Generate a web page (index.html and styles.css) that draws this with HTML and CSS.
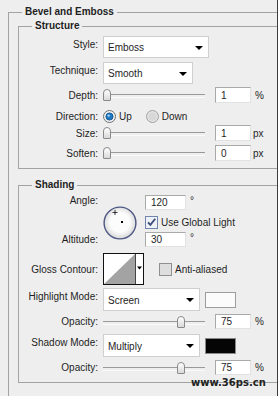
FILE: index.html
```html
<!DOCTYPE html>
<html>
  <head>
    <title>Bevel and Emboss</title>
    <link rel="stylesheet" href="styles.css">
  </head>
  <body>
    <fieldset class="group outer">
      <legend>Bevel and Emboss</legend>

      <fieldset class="group section">
        <legend>Structure</legend>

        <div class="row row-select">
          <span class="lbl">Style:</span>
          <div class="select select-style"><span>Emboss</span><i class="caret"></i></div>
        </div>

        <div class="row row-select row-technique">
          <span class="lbl">Technique:</span>
          <div class="select select-technique"><span>Smooth</span><i class="caret"></i></div>
        </div>

        <div class="row row-slider row-depth">
          <span class="lbl">Depth:</span>
          <div class="slider"><div class="thumb"></div></div>
          <div class="num">1</div>
          <span class="unit">%</span>
        </div>

        <div class="row row-direction">
          <span class="lbl">Direction:</span>
          <span class="opt">
            <svg class="radio" width="13" height="13" viewBox="0 0 13 13">
              <circle cx="6.5" cy="6.5" r="6" fill="#f3f3f3" stroke="#6f6f6f"/>
              <circle cx="6.5" cy="6.5" r="3.6" fill="#1f78c1" stroke="#0d4c86" stroke-width="0.8"/>
              <circle cx="5.6" cy="5.6" r="1.2" fill="#a8d6f8"/>
            </svg>
            Up
          </span>
          <span class="opt">
            <svg class="radio" width="13" height="13" viewBox="0 0 13 13">
              <circle cx="6.5" cy="6.5" r="6" fill="#e4e4e4" stroke="#a0a0a0"/>
              <circle cx="6.5" cy="6.5" r="4.3" fill="#d8d8d8"/>
            </svg>
            Down
          </span>
        </div>

        <div class="row row-slider row-size">
          <span class="lbl">Size:</span>
          <div class="slider"><div class="thumb"></div></div>
          <div class="num">1</div>
          <span class="unit unit-px">px</span>
        </div>

        <div class="row row-slider row-soften">
          <span class="lbl">Soften:</span>
          <div class="slider"><div class="thumb"></div></div>
          <div class="num">0</div>
          <span class="unit unit-px">px</span>
        </div>
      </fieldset>

      <fieldset class="group section shading">
        <legend>Shading</legend>

        <div class="angle">
          <div class="angle-labels">
            <span>Angle:</span>
            <span>Altitude:</span>
          </div>
          <svg class="dial" width="34" height="34" viewBox="0 0 34 34">
            <defs>
              <radialGradient id="dialFill" cx="50%" cy="48%" r="55%">
                <stop offset="0.55" stop-color="#fcfcfc"/>
                <stop offset="1" stop-color="#d2d2d2"/>
              </radialGradient>
            </defs>
            <circle cx="17" cy="17" r="15.9" fill="url(#dialFill)" stroke="#4d5885" stroke-width="1.4"/>
            <path d="M9.5 6.5h5M12 4v5" stroke="#222" stroke-width="0.9"/>
            <rect x="18" y="15" width="2" height="2" fill="#000"/>
          </svg>
          <div class="angle-fields">
            <div class="field">
              <div class="num num-wide">120</div>
              <span class="deg">°</span>
            </div>
            <div class="check check-global">
              <svg width="13" height="13" viewBox="0 0 13 13">
                <rect x="0.5" y="0.5" width="12" height="12" fill="#eef1f6" stroke="#7085ad"/>
                <path d="M3 6.3l2.4 2.6 4.8-6.2" fill="none" stroke="#3a4d7a" stroke-width="1.8"/>
              </svg>
              <span>Use Global Light</span>
            </div>
            <div class="field field-altitude">
              <div class="num num-wide">30</div>
              <span class="deg">°</span>
            </div>
          </div>
        </div>

        <div class="row row-contour">
          <span class="lbl">Gloss Contour:</span>
          <svg class="contour" width="41" height="32" viewBox="0 0 41 32">
            <rect x="0.5" y="0.5" width="40" height="31" fill="#fff" stroke="#111"/>
            <polygon points="1,31 32,1 32,31" fill="#a3a3a3"/>
            <line x1="32.5" y1="1" x2="32.5" y2="31" stroke="#444"/>
            <polygon points="34,13.5 39,13.5 36.5,16.5" fill="#000"/>
          </svg>
          <div class="check check-aa">
            <svg width="13" height="13" viewBox="0 0 13 13">
              <rect x="0.5" y="0.5" width="12" height="12" fill="#dedede" stroke="#8f8f8f"/>
            </svg>
            <span>Anti-aliased</span>
          </div>
        </div>

        <div class="row row-select row-mode">
          <span class="lbl">Highlight Mode:</span>
          <div class="select select-mode"><span>Screen</span><i class="caret"></i></div>
          <div class="swatch swatch-white"></div>
        </div>

        <div class="row row-slider row-opacity">
          <span class="lbl">Opacity:</span>
          <div class="slider"><div class="thumb" style="--pos: 74px"></div></div>
          <div class="num">75</div>
          <span class="unit">%</span>
        </div>

        <div class="row row-select row-mode row-shadow">
          <span class="lbl">Shadow Mode:</span>
          <div class="select select-mode"><span>Multiply</span><i class="caret"></i></div>
          <div class="swatch swatch-black"></div>
        </div>

        <div class="row row-slider row-opacity">
          <span class="lbl">Opacity:</span>
          <div class="slider"><div class="thumb" style="--pos: 74px"></div></div>
          <div class="num">75</div>
          <span class="unit">%</span>
        </div>
      </fieldset>
    </fieldset>

    <div class="watermark">www.36ps.cn</div>
  </body>
</html>
```

FILE: styles.css
```css
:root {
  --panel-bg: #eeeeee;
  --line-color: #a3a3a3;
  --text-primary: #1e1e1e;
  --field-border: #cfcfcf;
}

* {
  box-sizing: border-box;
}

body {
  position: relative;
  width: 278px;
  height: 396px;
  margin: 0;
  overflow: hidden;
  background-color: var(--panel-bg);
  border-right: 1px solid #3c3c3c;
  font-family: "Liberation Sans", Arial, sans-serif;
  font-size: 10px;
  color: var(--text-primary);
}

.group {
  min-width: 0;
  margin: 0;
  padding: 0;
  border: 1px solid var(--line-color);
  border-right: 0;
}

.group > legend {
  padding: 0 3px;
  font-weight: bold;
  line-height: 14px;
}

.outer {
  height: 400px;
  margin: 5px 0 0 8px;
  padding-left: 9px;
  border-bottom: 0;
}

.outer > legend {
  margin-left: 4px;
}

.section {
  padding: 3px 0 7px;
}

.section > legend {
  margin-left: 13px;
}

.shading {
  margin-top: 9px;
}

.row {
  display: flex;
  align-items: center;
}

.lbl {
  flex: none;
  width: 79px;
  margin-right: 5px;
  text-align: right;
  white-space: nowrap;
}

/* dropdown rows */
.row-select {
  height: 22px;
}

.row-select .lbl {
  align-self: flex-start;
  padding-top: 2px;
  line-height: 14px;
}

.row-technique {
  margin-top: 4px;
}

.select {
  display: flex;
  align-items: center;
  flex: none;
  height: 100%;
  padding: 1px 0 0 4px;
  background-color: white;
  border: 1px solid var(--field-border);
}

.select-style {
  width: 106px;
}

.select-technique {
  width: 90px;
}

.select-mode {
  width: 97px;
}

.caret {
  margin-left: auto;
  margin-right: 5px;
  border-top: 4px solid #000;
  border-left: 4px solid transparent;
  border-right: 4px solid transparent;
}

/* slider rows */
.row-slider {
  height: 16px;
}

.row-depth {
  margin-top: 3px;
}

.row-size {
  margin-top: 2px;
}

.row-soften {
  margin-top: 4px;
}

.slider {
  position: relative;
  flex: none;
  width: 102px;
  height: 12px;
}

.slider::before {
  content: "";
  position: absolute;
  left: 0;
  right: 0;
  top: 5px;
  height: 2px;
  border-top: 1px solid #9a9a9a;
  border-bottom: 1px solid #fafafa;
}

.thumb {
  position: absolute;
  top: 0;
  left: var(--pos, 0);
  width: 8px;
  height: 12px;
  border: 1px solid #8a8a8a;
  border-radius: 4px 4px 1px 1px;
  background: linear-gradient(#ffffff, #d9d9d9);
}

.num {
  flex: none;
  width: 36px;
  height: 100%;
  margin-left: 10px;
  padding-left: 5px;
  display: flex;
  align-items: center;
  background-color: white;
  border: 1px solid;
  border-color: #a9a9a9 #e2e2e2 #e2e2e2 #a9a9a9;
}

.unit {
  margin-left: 4px;
}

.unit-px {
  margin-left: 2px;
}

.row-direction {
  height: 14px;
  margin-top: 6px;
}

.opt {
  display: flex;
  align-items: center;
  gap: 3px;
}

.opt + .opt {
  margin-left: 14px;
}

/* angle block */
.angle {
  display: flex;
  height: 52px;
}

.angle-labels {
  display: flex;
  flex-direction: column;
  justify-content: space-between;
  width: 79px;
  margin-right: 5px;
  text-align: right;
  line-height: 15px;
}

.angle-labels span:first-child {
  line-height: 12px;
}

.dial {
  flex: none;
  margin: 11px 8px 0 0;
}

.angle-fields {
  display: flex;
  flex-direction: column;
}

.field {
  display: flex;
  align-items: center;
  height: 15px;
}

.field-altitude {
  margin-top: 3px;
}

.num-wide {
  width: 41px;
  margin-left: 0;
}

.deg {
  align-self: flex-start;
  margin-left: 4px;
  line-height: 12px;
}

.check {
  display: flex;
  align-items: center;
  gap: 3px;
}

.check svg {
  flex: none;
}

.check-global {
  height: 14px;
  margin-top: 5px;
}

/* contour */
.row-contour {
  height: 32px;
  margin-top: 6px;
}

.contour {
  flex: none;
}

.check-aa {
  margin-left: 15px;
}

/* blend modes */
.row-mode {
  height: 23px;
  margin-top: 3px;
}

.row-shadow {
  margin-top: 5px;
}

.swatch {
  flex: none;
  width: 31px;
  height: 16px;
  margin-left: 5px;
  border: 1px solid #9d9d9d;
}

.swatch-white {
  background-color: #fbfbfb;
}

.swatch-black {
  background-color: #050505;
  border-color: #8a8a8a;
}

.row-opacity {
  height: 15px;
  margin-top: 3px;
}

.watermark {
  position: absolute;
  left: 191px;
  top: 377px;
  font-family: "DejaVu Sans", sans-serif;
  font-size: 10px;
  font-weight: bold;
  line-height: 12px;
  color: #222;
}
```
